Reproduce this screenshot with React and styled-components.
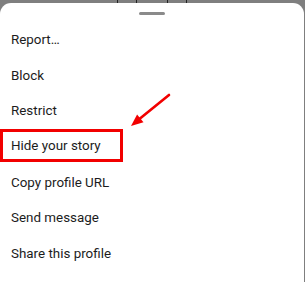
import styled, { createGlobalStyle } from "styled-components";

const GlobalStyle = createGlobalStyle`
  html, body {
    margin: 0;
    padding: 0;
    background: #7f7f7f;
    overflow: hidden;
  }
`;

const Backdrop = styled.div`
  position: relative;
  width: 305px;
  height: 282px;
  padding-top: 3px;
  box-sizing: border-box;
  background: #7f7f7f;
`;

const Ticks = styled.div`
  display: flex;
  gap: 18px;
  position: absolute;
  top: 0;
  left: 117px;
`;

const Tick = styled.span`
  width: 1px;
  height: 3px;
  background: #222;
  margin-right: ${(p) => p.$gap || 0}px;
`;

const Sheet = styled.div`
  position: relative;
  width: 304px;
  height: 279px;
  background: #fff;
  border-radius: 11px 11px 0 0;
  font-family: Roboto, "Liberation Sans", sans-serif;
`;

const Handle = styled.div`
  width: 26px;
  height: 3px;
  border-radius: 2px;
  background: #8a8a8a;
  margin: 0 auto;
  position: relative;
  top: 9px;
`;

const List = styled.ul`
  list-style: none;
  margin: 0;
  padding: 16px 0 0;
`;

const Item = styled.li`
  height: 35.6px;
  display: flex;
  align-items: center;
  padding-left: 11px;
  font-size: 13.4px;
  color: #1c1c1c;
  box-sizing: border-box;
  ${(p) =>
    p.$highlight &&
    `
    border: 3px solid #f20000;
    width: 123px;
    height: 33px;
    margin-bottom: 2.6px;
    padding-left: 8px;
  `}
`;

const Arrow = styled.svg`
  position: absolute;
  left: 125px;
  top: 88px;
`;

const items = [
  "Report…",
  "Block",
  "Restrict",
  "Hide your story",
  "Copy profile URL",
  "Send message",
  "Share this profile",
];

export default function App() {
  return (
    <Backdrop>
      <GlobalStyle />
      <Ticks>
        <Tick />
        <Tick $gap={12} />
        <Tick />
        <Tick />
      </Ticks>
      <Sheet>
        <Handle />
        <List>
          {items.map((t) => (
            <Item key={t} $highlight={t === "Hide your story"}>
              {t}
            </Item>
          ))}
        </List>
        <Arrow width="55" height="45" viewBox="0 0 55 45">
          <line x1="44" y1="4" x2="15" y2="27.6" stroke="#f20000" strokeWidth="2.6" strokeLinecap="round" />
          <polygon points="6,35 18.5,31.3 12.1,23.5" fill="#f20000" />
        </Arrow>
      </Sheet>
    </Backdrop>
  );
}
